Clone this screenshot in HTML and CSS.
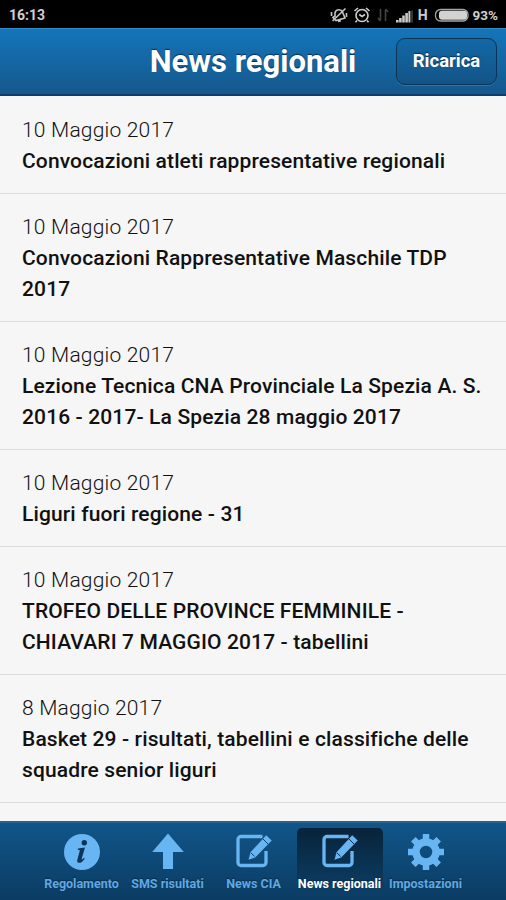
FILE: index.html
```
<!DOCTYPE html>
<html lang="it">
<head>
    <meta charset="UTF-8">
    <meta name="viewport" content="width=device-width, initial-scale=1.0">
    <title>News regionali</title>
    <link rel="stylesheet" href="styles.css">
</head>
<body>
    <div class="status-bar">
        <span class="clock">16:13</span>
        <div class="status-icons">
            <svg class="icon-mute" width="18" height="18" viewBox="0 0 18 18" fill="none" stroke="#c4c4c4" stroke-width="1.6">
                <path d="M3 11.500l2-1.500V7a4 4 0 0 1 7.500-1l2.500 6-9 2.500zM8 15.500l3-.8M2.500 15L15.500 2.500M1.500 6v4M16.500 7v4"/>
            </svg>
            <svg class="icon-alarm" width="18" height="18" viewBox="0 0 18 18" fill="none" stroke="#d0d0d0" stroke-width="1.6">
                <circle cx="9" cy="9.500" r="6"/>
                <path d="M6.300 8.500L9 10.500l3-2M1.500 5L5 2M16.500 5L13 2M4 14.500l-1.500 1.700M14 14.500l1.500 1.700"/>
            </svg>
            <svg class="icon-data" width="14" height="18" viewBox="0 0 14 18" fill="none" stroke="#444" stroke-width="1.6">
                <path d="M4.500 3v11.500M2 12l2.500 3M9.500 15V3.500M12 6L9.500 3"/>
            </svg>
            <svg class="icon-signal" width="18" height="18" viewBox="0 0 18 18" fill="#c8c8c8">
                <path d="M0 14h2.600v2.500H0zM3.100 12h2.600v4.500H3.100zM6.200 9.500h2.600v7H6.200zM9.300 7h2.600v9.500H9.300zM12.400 5h2v11.500h-2z"/>
                <path d="M15 4.500h2v12h-2z" fill="#333"/>
            </svg>
            <span class="network">H</span>
            <svg class="icon-battery" width="35" height="14" viewBox="0 0 35 14">
                <rect x="1.500" y="1.500" width="32.500" height="11.500" rx="5" fill="none" stroke="#a5a5a5" stroke-width="1.300"/>
                <rect x="5" y="2.800" width="28" height="9" rx="3" fill="#d2d2d2"/>
            </svg>
            <span class="percent">93%</span>
        </div>
    </div>

    <header>
        <h1>News regionali</h1>
        <button type="button">Ricarica</button>
    </header>

    <ul class="news">
        <li>
            <p class="date">10 Maggio 2017</p>
            <p class="title">Convocazioni atleti rappresentative regionali</p>
        </li>
        <li>
            <p class="date">10 Maggio 2017</p>
            <p class="title">Convocazioni Rappresentative Maschile TDP<br>2017</p>
        </li>
        <li>
            <p class="date">10 Maggio 2017</p>
            <p class="title">Lezione Tecnica CNA Provinciale La Spezia A. S.<br>2016 - 2017- La Spezia 28 maggio 2017</p>
        </li>
        <li>
            <p class="date">10 Maggio 2017</p>
            <p class="title">Liguri fuori regione - 31</p>
        </li>
        <li>
            <p class="date">10 Maggio 2017</p>
            <p class="title">TROFEO DELLE PROVINCE FEMMINILE -<br>CHIAVARI 7 MAGGIO 2017 - tabellini</p>
        </li>
        <li>
            <p class="date">8 Maggio 2017</p>
            <p class="title">Basket 29 - risultati, tabellini e classifiche delle<br>squadre senior liguri</p>
        </li>
    </ul>

    <nav class="tabs">
        <a class="tab">
            <svg width="38" height="38" viewBox="0 0 38 38">
                <circle cx="19" cy="19" r="18" fill="#68b5f3"/>
                <circle cx="21.300" cy="9.800" r="2.700" fill="#0c3558"/>
                <path d="M15 15.500l7-1-3.300 11.300c-.2 1 .8.900 2.300-1.100l.9.700c-2.400 3.400-4.300 4.600-6 4.400-1.800-.2-2-1.600-1.500-3.300l2.500-9.300-2.200-.5z" fill="#0c3558"/>
            </svg>
            <span>Regolamento</span>
        </a>
        <a class="tab">
            <svg width="38" height="38" viewBox="0 0 38 38" fill="#68b5f3">
                <path d="M19 0.500l15.800 18.500H24V36h-10V19H3.200z"/>
            </svg>
            <span>SMS risultati</span>
        </a>
        <a class="tab">
            <svg width="38" height="38" viewBox="0 0 38 38">
                <path d="M27.500 3.500H6a3 3 0 0 0-3 3v23a3 3 0 0 0 3 3h22a3 3 0 0 0 3-3V18" fill="none" stroke="#68b5f3" stroke-width="3.300"/>
                <path d="M31.200 2.200l5.500 5.300-16.500 17-6.700 2.300 2-7.500z" fill="#68b5f3"/>
                <path d="M15.800 19.800l3.800 3.600M27.500 5.500l5.500 5.500" stroke="#0d4270" stroke-width="1"/>
            </svg>
            <span>News CIA</span>
        </a>
        <a class="tab active">
            <svg width="38" height="38" viewBox="0 0 38 38">
                <path d="M27.500 3.500H6a3 3 0 0 0-3 3v23a3 3 0 0 0 3 3h22a3 3 0 0 0 3-3V18" fill="none" stroke="#68b5f3" stroke-width="3.300"/>
                <path d="M31.200 2.200l5.500 5.300-16.500 17-6.700 2.300 2-7.500z" fill="#68b5f3"/>
                <path d="M15.800 19.800l3.800 3.600M27.500 5.500l5.500 5.500" stroke="#0d2b45" stroke-width="1"/>
            </svg>
            <span>News regionali</span>
        </a>
        <a class="tab">
            <svg width="38" height="38" viewBox="0 0 38 38">
                <circle cx="19" cy="19" r="10" fill="none" stroke="#68b5f3" stroke-width="7.500"/>
                <g stroke="#68b5f3" stroke-width="6.500">
                    <path d="M19 1v7M19 30v7M1 19h7M30 19h7"/>
                    <path d="M6.300 6.300l5 5M26.700 26.700l5 5M31.700 6.300l-5 5M11.300 26.700l-5 5"/>
                </g>
            </svg>
            <span>Impostazioni</span>
        </a>
    </nav>
</body>
</html>
```
FILE: styles.css
```
* {
    box-sizing: border-box;
}

body {
    margin: 0;
    height: 900px;
    display: flex;
    flex-direction: column;
    font-family: Roboto, sans-serif;
    background: #f6f6f6;
    color: #111;
    overflow: hidden;
}

.status-bar {
    height: 28px;
    flex-shrink: 0;
    display: flex;
    justify-content: space-between;
    align-items: center;
    padding: 1px 8px 0 9px;
    background: #000;
    color: #cfcfcf;
    font-size: 14px;
    font-weight: 700;
}

.status-icons {
    display: flex;
    align-items: center;
}

.icon-alarm {
    margin-left: 5px;
}

.icon-data {
    margin-left: 5px;
}

.icon-signal {
    margin-left: 6px;
}

.network {
    margin-left: 4px;
}

.icon-battery {
    margin-left: 6px;
}

.percent {
    margin-left: 4px;
    font-size: 13.5px;
}

header {
    height: 68px;
    flex-shrink: 0;
    display: grid;
    grid-template-columns: 1fr auto 1fr;
    align-items: center;
    padding: 0 9px;
    background: linear-gradient(#1475ba, #15588c);
    border-top: 1px solid #3489c6;
    border-bottom: 2px solid #0b3f70;
}

h1 {
    grid-column: 2;
    margin: 0;
    font-size: 31px;
    font-weight: 700;
    line-height: 40px;
    color: #fff;
    text-shadow: 0 -1px 1px #062c50;
}

button {
    justify-self: end;
    width: 101px;
    height: 47px;
    padding: 0 0 2px;
    border: 1px solid #0a3556;
    border-radius: 9px;
    background: linear-gradient(#1268a6, #135487);
    box-shadow: 0 1px 0 #2d75aa;
    font-family: inherit;
    font-size: 18.5px;
    font-weight: 700;
    color: #fff;
    text-shadow: 0 -1px 1px #062c50;
}

.news {
    flex: 1;
    margin: 0;
    padding: 1px 0 0;
    list-style: none;
}

.news li {
    padding: 18px 22px 16px;
    border-bottom: 1px solid #dcdcdc;
}

.news p {
    margin: 0;
    font-size: 21px;
    line-height: 31px;
    white-space: nowrap;
}

.news .date {
    font-weight: 300;
    letter-spacing: 0.2px;
}

.news .title {
    font-weight: 500;
    letter-spacing: 0.13px;
}

.tabs {
    height: 79px;
    flex-shrink: 0;
    display: flex;
    justify-content: center;
    padding: 5px 0 0 1px;
    border-top: 2px solid #2b638f;
    background: linear-gradient(#115589, #0b3c63);
}

.tab {
    width: 86px;
    height: 66px;
    display: flex;
    flex-direction: column;
    align-items: center;
    border-radius: 5px 5px 0 0;
    padding-top: 5px;
    font-size: 12.5px;
    font-weight: 700;
    line-height: 16px;
    color: #60a9e2;
    text-shadow: 0 -1px 1px #082c4a;
    white-space: nowrap;
}

.tab svg {
    flex-shrink: 0;
}

.tab span {
    margin-top: 5px;
}

.tab.active {
    color: #fff;
    background: linear-gradient(#08233a, #0c3f67);
}
```
